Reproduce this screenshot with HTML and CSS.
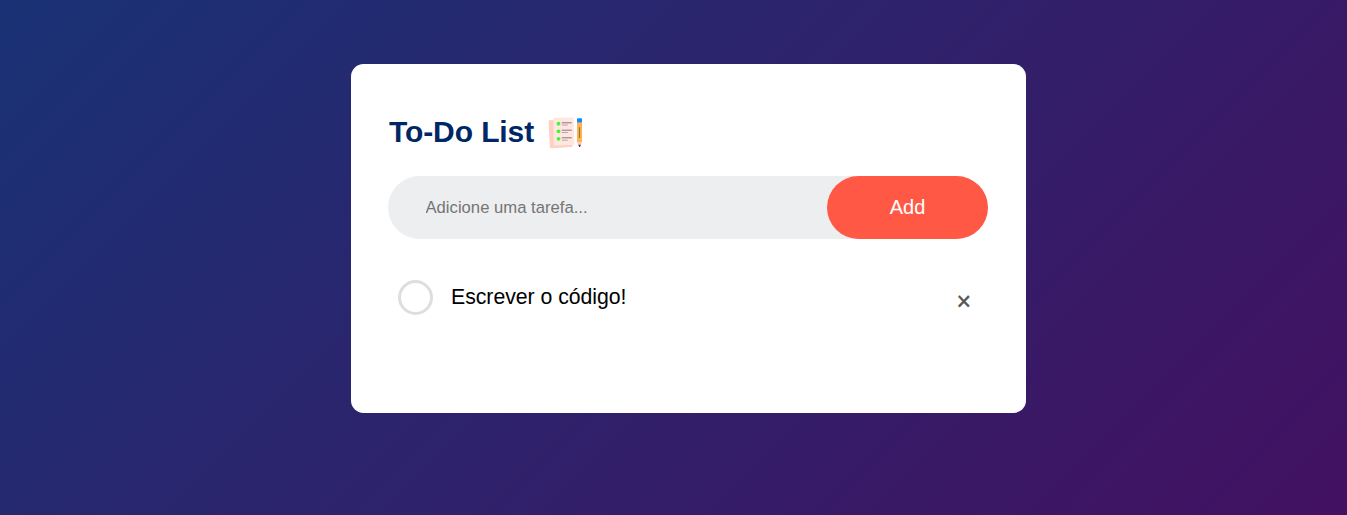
FILE: index.html
```html
<!DOCTYPE html>
<html lang="pt-BR">
<head>
<meta charset="utf-8">
<title>To-Do List</title>
<link rel="stylesheet" href="styles.css">
</head>
<body>
<div class="container">
  <main class="todo-app">
    <h2 class="title">To-Do List
      <svg class="title-icon" viewBox="0 0 36 32" aria-hidden="true">
        <path d="M1.2 3.2 L22 2.2 L24.5 29 Q24.5 30 23.4 30.1 L3.3 31.3 Q2 31.3 1.9 30 L.6 4.4 Q.5 3.3 1.2 3.2Z" fill="#ffcfc3"/>
        <path d="M6.7.8 L24.3.4 Q25.5.4 25.6 1.6 L26.5 26.8 Q26.5 28 25.3 28.1 L7 28.6 Q5.7 28.6 5.6 27.4 L5.4 2.2 Q5.4.9 6.7.8Z" fill="#ffe7dd"/>
        <g fill="#45f53c"><circle cx="10.5" cy="6.7" r="1.9"/><circle cx="10.5" cy="14.3" r="1.9"/><circle cx="10.5" cy="21.8" r="1.9"/></g>
        <g stroke="#8b7398" stroke-width="1"><path d="M13.8 5.8h10M13.8 13.2h10M13.8 20.8h10"/><path d="M13.8 8h6M13.8 15.5h6M13.8 23.2h6" stroke="#b9a1b6"/></g>
        <path d="M29 5.2h5v20.1h-5z" fill="#ffb24d"/>
        <path d="M30 1.2h3q1 0 1 1v3.4h-5V2.2q0-1 1-1z" fill="#088cff"/>
        <path d="M31.5 10.2v10.7" stroke="#8d714b" stroke-width="1.1"/>
        <path d="M29 25.2h5L32.2 29.5h-1.4z" fill="#ffc5bf"/>
        <path d="M30.4 27.8h2.4l-.8 2.2h-.8z" fill="#40334b"/>
      </svg>
    </h2>
    <div class="row">
      <input class="task-input" type="text" placeholder="Adicione uma tarefa...">
      <button class="add-button">Add</button>
    </div>
    <ul class="task-list">
      <li class="task"><i class="check"></i><span class="task-text">Escrever o código!</span><span class="remove">×</span></li>
    </ul>
  </main>
</div>
</body>
</html>
```
FILE: styles.css
```css
* {
  margin: 0;
  padding: 0;
  box-sizing: border-box;
  font-family: "Liberation Sans", Arial, sans-serif;
}
.container {
  width: 100%;
  height: 515px;
  padding: 64px 0 0 30px;
  overflow: hidden;
  background: linear-gradient(135deg, #1a3275, #431162);
}
.todo-app {
  width: 675px;
  height: 349px;
  margin: 0 auto;
  padding: 49px 38px 0 37px;
  background: #fff;
  border-radius: 12.5px;
}
.title {
  display: flex;
  align-items: center;
  height: 37px;
  padding-left: 1px;
  color: #002765;
  font-size: 30px;
  letter-spacing: -0.1px;
}
.title-icon {
  width: 36px;
  height: 32px;
  margin: 2px 0 0 14px;
}
.row {
  display: flex;
  align-items: center;
  height: 63px;
  margin-top: 26px;
  padding-left: 37.5px;
  background: #edeef0;
  border-radius: 37.5px;
}
.task-input {
  flex: 1;
  min-width: 0;
  border: 0;
  outline: 0;
  background: transparent;
  font-size: 16.67px;
}
.add-button {
  width: 161px;
  height: 63px;
  border: 0;
  border-radius: 50px;
  background: #ff5945;
  color: #fff;
  font-size: 20px;
}
.task-list {
  list-style: none;
  margin-top: 33px;
}
.task {
  display: flex;
  align-items: center;
  height: 50px;
  padding: 0 17px 0 10px;
}
.check {
  width: 35px;
  height: 35px;
  border: 3px solid #dedede;
  border-radius: 50%;
}
.task-text {
  margin-left: 18px;
  font-size: 21.25px;
  letter-spacing: -0.03px;
}
.remove {
  margin: 7px 0 0 auto;
  color: #555;
  font-size: 25px;
  line-height: 30px;
  -webkit-text-stroke: 0.4px #555;
}
```
